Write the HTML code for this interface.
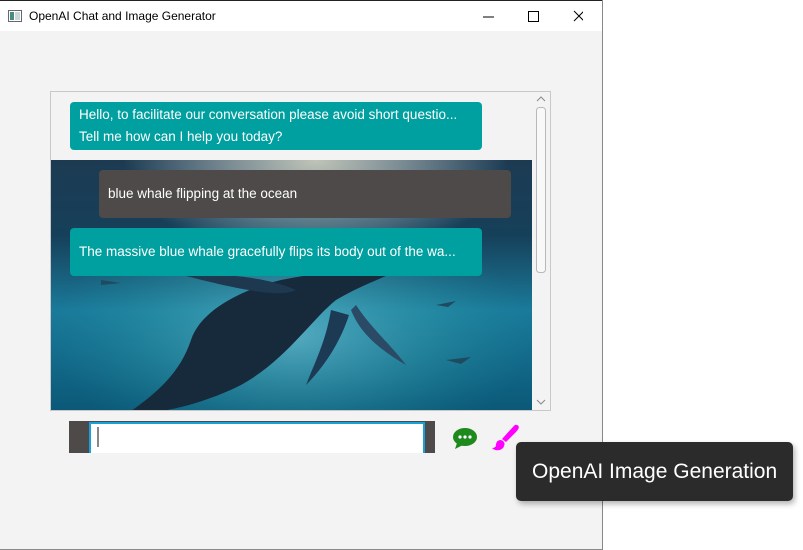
<!DOCTYPE html>
<html><head><style>
*{margin:0;padding:0;box-sizing:border-box}
body{width:803px;height:550px;background:#fff;position:relative;overflow:hidden;font-family:"Liberation Sans",sans-serif}
.win{position:absolute;left:0;top:0;width:603px;height:550px;background:#f3f3f3;border-right:1px solid #888;border-bottom:1px solid #888}
.title{position:absolute;left:0;top:0;width:602px;height:31px;background:#fff;border-top:1px solid #222}
.title span{position:absolute;left:29px;top:8px;font-size:12px;color:#000}
.panel{position:absolute;left:50px;top:91px;width:501px;height:320px;border:1px solid #c8c8c8;background:#f3f3f3;overflow:hidden}
.bub{position:absolute;color:#fff;font-size:13.5px;border-radius:4px;padding:0 9px;line-height:22px;white-space:nowrap;overflow:hidden}
.t{background:#009fa0}
.d{background:#4d4a49}
</style></head><body>
<div class="win">
<div class="title">
<svg style="position:absolute;left:8px;top:9px" width="14" height="12"><rect x="0.5" y="0.5" width="13" height="11" fill="#fff" stroke="#667"/><rect x="2" y="2" width="4" height="8" fill="#4a8a80"/><rect x="7" y="2" width="5" height="8" fill="#c8d8d4"/></svg>
<span>OpenAI Chat and Image Generator</span>
<svg style="position:absolute;left:483px;top:9px" width="100" height="14"><line x1="0" y1="7" x2="11" y2="7" stroke="#000"/><rect x="45.5" y="1.5" width="10" height="10" fill="none" stroke="#000"/><path d="M91 1 L101 11 M101 1 L91 11" stroke="#000"/></svg>
</div>
<div class="panel">
<svg style="position:absolute;left:0;top:68px" width="481" height="251" viewBox="0 0 481 251">
<defs>
<linearGradient id="g" x1="0" y1="0" x2="0" y2="1"><stop offset="0" stop-color="#1c3b52"/><stop offset="0.3" stop-color="#16405a"/><stop offset="0.6" stop-color="#1a7a9a"/><stop offset="1" stop-color="#0b5878"/></linearGradient>
<radialGradient id="s" cx="0.55" cy="0" r="0.4"><stop offset="0" stop-color="#e8e6d0" stop-opacity="0.8"/><stop offset="1" stop-color="#fff" stop-opacity="0"/></radialGradient>
<radialGradient id="l" cx="0.5" cy="0.7" r="0.5"><stop offset="0" stop-color="#7fd0e0" stop-opacity="0.6"/><stop offset="1" stop-color="#2aa" stop-opacity="0"/></radialGradient>
</defs>
<rect width="481" height="251" fill="url(#g)"/>
<rect width="481" height="251" fill="url(#s)"/>
<rect width="481" height="251" fill="url(#l)"/>
<path d="M80 251 C110 230 130 210 140 180 C150 150 190 130 230 120 C280 110 330 105 365 102 C340 115 310 125 285 140 C260 160 235 200 190 225 C160 240 130 248 110 251 Z" fill="#172a3c"/>
<path d="M135 116 C170 112 220 118 245 130 C230 138 190 130 135 116 Z" fill="#1e3850"/>
<path d="M280 150 C275 180 265 200 255 225 C275 205 290 180 298 155 Z" fill="#1d3a55"/>
<path d="M300 150 C310 175 330 190 355 205 C340 185 320 168 305 145 Z" fill="#2a4a66"/>
<path d="M385 145 l20 -4 l-8 6 Z M395 200 l25 -3 l-10 7 Z M50 120 l20 3 l-20 2Z" fill="#1f4b60"/>
</svg>
<div class="bub t" style="left:19px;top:10px;width:412px;height:48px;padding-top:2px">Hello, to facilitate our conversation please avoid short questio...<br>Tell me how can I help you today?</div>
<div class="bub d" style="left:48px;top:78px;width:412px;height:48px;padding-top:13px">blue whale flipping at the ocean</div>
<div class="bub t" style="left:19px;top:136px;width:412px;height:48px;padding-top:13px">The massive blue whale gracefully flips its body out of the wa...</div>
<div style="position:absolute;left:482px;top:0;width:17px;height:318px;background:#f3f3f3">
<svg width="17" height="318"><path d="M4 9 L8 5 L12 9" fill="none" stroke="#888"/><rect x="3.5" y="15.5" width="9" height="165" rx="3" fill="#f8f8f8" stroke="#b8b8b8"/><path d="M4 308 L8 312 L12 308" fill="none" stroke="#888"/></svg>
</div>
</div>
<div style="position:absolute;left:69px;top:421px;width:366px;height:32px;background:#4d4a49"></div>
<div style="position:absolute;left:89px;top:422px;width:336px;height:31px;background:#fff;border:2px solid #1aa0d8;border-bottom:none"></div>
<div style="position:absolute;left:97px;top:427px;width:2px;height:20px;background:#888"></div>
<svg style="position:absolute;left:451px;top:426px" width="30" height="24"><ellipse cx="14" cy="11" rx="12" ry="9" fill="#1e8a1e"/><path d="M6 17 L4 23 L12 19 Z" fill="#1e8a1e"/><circle cx="9" cy="11" r="1.6" fill="#fff"/><circle cx="14" cy="11" r="1.6" fill="#fff"/><circle cx="19" cy="11" r="1.6" fill="#fff"/></svg>
<svg style="position:absolute;left:490px;top:423px" width="32" height="30"><path d="M27 2 C30 3 29 6 26 9 L16 19 L12 16 L22 5 C24 3 25 1 27 2 Z" fill="#ff00ff"/><path d="M11 17 C7 17 6 20 6 22 C6 24 4 25 2 25 C5 28 10 28 13 25 C15 22 15 20 13 18 Z" fill="#ff00ff"/></svg>
</div>
<div style="position:absolute;left:516px;top:442px;width:277px;height:59px;background:#2b2b2b;border-radius:5px;color:#fff;font-size:21px;line-height:59px;padding-left:16px;font-family:'Liberation Sans',sans-serif;box-shadow:2px 3px 6px rgba(0,0,0,0.3)">OpenAI Image Generation</div>
</body></html>
